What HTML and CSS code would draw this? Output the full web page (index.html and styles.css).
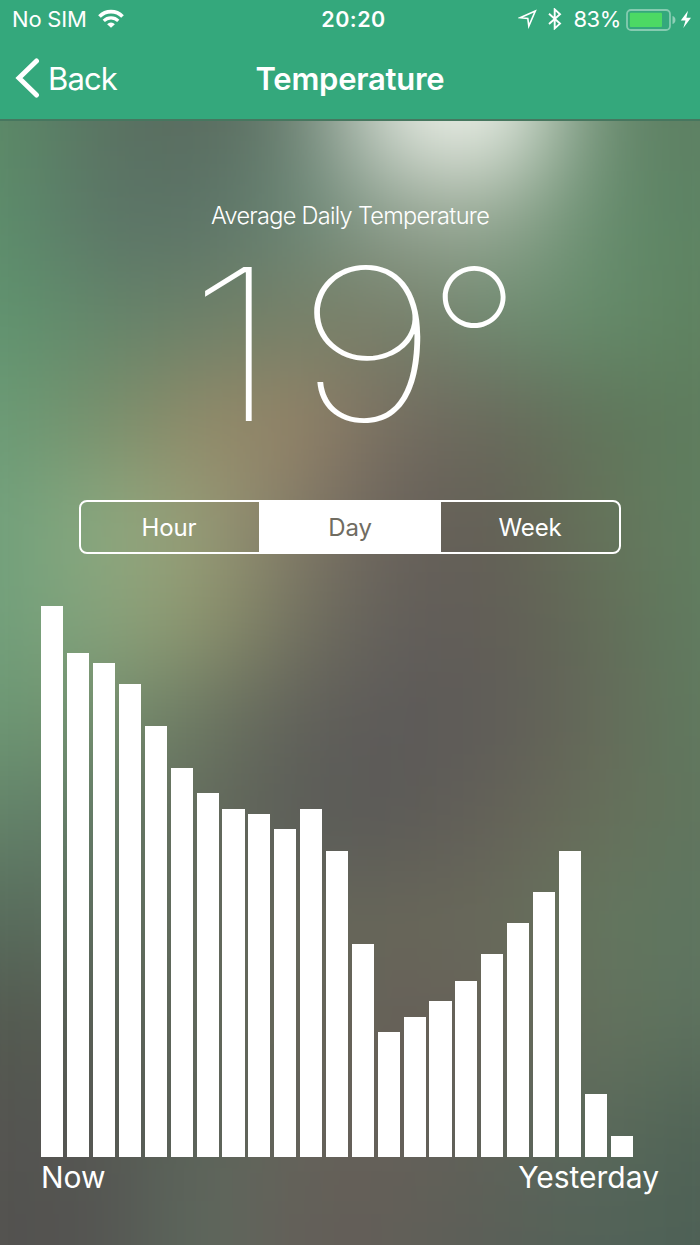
FILE: index.html
```html
<!DOCTYPE html>
<html lang="en">
<head>
<meta charset="utf-8">
<title>Temperature</title>
<link rel="stylesheet" href="styles.css">
</head>
<body>
<div class="screen">
  <header class="top">
    <div class="status">
      <div class="carrier">
        <span class="sim">No SIM</span>
        <svg class="wifi" width="26" height="19" viewBox="0 0 28 20"><g fill="none" stroke="#fff" stroke-width="4"><path d="M1.6 7.8A17.5 17.5 0 0 1 26.4 7.8"/><path d="M6.2 12.6A11 11 0 0 1 21.8 12.6" stroke-width="3.3"/></g><path d="M14 20l-4.2-3.9a5.8 5.8 0 0 1 8.4 0z" fill="#fff"/></svg>
      </div>
      <span class="time">20:20</span>
      <div class="indicators">
        <svg class="loc" width="19" height="20" viewBox="0 0 19 20"><path d="M17.3 2L2.2 8.7l7.6.8 1 7.6z" fill="none" stroke="#fff" stroke-width="1.6"/></svg>
        <svg class="bt" width="14" height="22" viewBox="0 0 14 22"><path d="M1 5.8l11 9.8-5.3 4.8V1.4L12 6.2 1 16" fill="none" stroke="#fff" stroke-width="1.9"/></svg>
        <span class="pct">83%</span>
        <svg class="battery" width="50" height="22" viewBox="0 0 50 22"><rect x="1" y="1" width="43" height="20" rx="4" fill="none" stroke="#fff" stroke-opacity=".4" stroke-width="1.8"/><rect x="3.8" y="3.8" width="32.2" height="14.2" rx="1" fill="#4cd964"/><path d="M46.5 7a4.2 4.2 0 0 1 0 8z" fill="#fff" fill-opacity=".45"/></svg>
        <svg class="bolt" width="12" height="19" viewBox="0 0 12 19"><path d="M8 .8L.8 10.6h4.7L3.3 18 11 7.8H6.4z" fill="#fff"/></svg>
      </div>
    </div>
    <nav class="nav">
      <a class="back"><svg width="26" height="40" viewBox="0 0 26 40"><path d="M22.5 3L5 20 22.5 37" fill="none" stroke="#fff" stroke-width="5" stroke-linecap="round"/></svg><span>Back</span></a>
      <h1 class="title">Temperature</h1>
      <span></span>
    </nav>
  </header>
  <main class="content">
    <div class="backdrop">
      <i class="r0"></i><i class="r1"></i><i class="r2"></i><i class="r3"></i><i class="r4"></i><i class="r5"></i><i class="r6"></i><i class="r7"></i><i class="r8"></i><i class="r9"></i><i class="r10"></i><i class="r11"></i>
    </div>
    <div class="caption">Average Daily Temperature</div>
    <div class="reading"><span class="one">1</span><span class="nine">9</span><span class="deg">°</span></div>
    <div class="segments"><span>Hour</span><span class="active">Day</span><span>Week</span></div>
    <div class="chart">
      <b style="height:551px"></b><b style="height:504px"></b><b style="height:494px"></b><b style="height:473px"></b><b style="height:431px"></b><b style="height:389px"></b><b style="height:364px"></b><b style="height:348px"></b><b style="height:343px"></b><b style="height:328px"></b><b style="height:348px"></b><b style="height:306px"></b><b style="height:213px"></b><b style="height:125px"></b><b style="height:140px"></b><b style="height:156px"></b><b style="height:176px"></b><b style="height:203px"></b><b style="height:234px"></b><b style="height:265px"></b><b style="height:306px"></b><b style="height:63px"></b><b style="height:21px"></b>
    </div>
    <div class="axis"><span>Now</span><span class="end">Yesterday</span></div>
  </main>
</div>
</body>
</html>
```
FILE: styles.css
```css
* { box-sizing: border-box; }
body { margin: 0; color: #fff; font-family: Inter, "Liberation Sans", sans-serif; }
.screen { width: 700px; height: 1245px; overflow: hidden; display: flex; flex-direction: column; }
svg { display: block; flex: none; }

.top { height: 121px; background: #34a87c; border-bottom: 2px solid #46775f; }
.status { height: 39px; display: grid; grid-template-columns: 1fr auto 1fr; align-items: center; padding: 0 8px 0 12px; font-size: 22px; line-height: 39px; }
.carrier { display: flex; align-items: center; gap: 11px; }
.sim { letter-spacing: -0.2px; }
.wifi { margin-top: -2px; }
.time { font-weight: 600; font-size: 21.5px; letter-spacing: 0.5px; padding-left: 3px; }
.indicators { display: flex; align-items: center; justify-content: flex-end; }
.loc { margin-top: -2px; }
.bt { margin-left: 11px; margin-top: -1px; }
.pct { margin: 0 5px 0 11px; letter-spacing: -0.4px; }
.bolt { margin-left: 4px; margin-top: -1px; }
.nav { height: 78px; display: grid; grid-template-columns: 1fr auto 1fr; align-items: center; padding: 0 14px; }
.back { display: flex; align-items: center; gap: 8px; font-size: 31px; letter-spacing: -0.9px; }
.title { margin: 0; font-size: 31px; font-weight: 600; letter-spacing: -0.25px; }

.content { position: relative; flex: 1; overflow: hidden; display: flex; flex-direction: column; z-index: 0; }
.backdrop { position: absolute; z-index: -1; left: -100px; right: -100px; top: -150px; height: 1400px; filter: blur(45px); display: flex; flex-direction: column; }
.backdrop i { display: block; height: 100px; background: linear-gradient(90deg, var(--a) 100px, var(--b) 200px, var(--c) 300px, var(--d) 400px, var(--e) 500px, var(--f) 600px, var(--g) 700px, var(--h) 800px); }
.backdrop .r0 { height: 200px; --a:#5b8c68; --b:#5a7262; --c:#586a5e; --d:#667e6e; --e:#e4eae1; --f:#f4f7f0; --g:#638669; --h:#5c7f62; }
.backdrop .r1 { --a:#5d8f6c; --b:#5b7466; --c:#5c7367; --d:#698674; --e:#92a291; --f:#98aa96; --g:#638b6b; --h:#5c8262; }
.backdrop .r2 { --a:#60956f; --b:#63856a; --c:#6d8069; --d:#788167; --e:#777d69; --f:#6f8c72; --g:#648c6a; --h:#5f815f; }
.backdrop .r3 { --a:#6a9c76; --b:#778f6c; --c:#938a68; --d:#978468; --e:#736b60; --f:#69695b; --g:#5f755a; --h:#5e7d5e; }
.backdrop .r4 { --a:#6f9f7b; --b:#8dab80; --c:#9b9d77; --d:#827866; --e:#67605a; --f:#635f55; --g:#67755a; --h:#5f7f60; }
.backdrop .r5 { --a:#6f9f7a; --b:#88a47d; --c:#92986f; --d:#72705f; --e:#615d5a; --f:#625d56; --g:#636d58; --h:#607d60; }
.backdrop .r6 { --a:#6a9773; --b:#76906f; --c:#6b7761; --d:#605f59; --e:#5c5959; --f:#5f5c57; --g:#666a59; --h:#5f7b5f; }
.backdrop .r7 { --a:#628268; --b:#637a67; --c:#646a5b; --d:#5a5c58; --e:#5c5a57; --f:#656258; --g:#68705a; --h:#5f765e; }
.backdrop .r8 { --a:#566b5b; --b:#5f6f5f; --c:#626a5c; --d:#66665a; --e:#68675a; --f:#68695a; --g:#64785f; --h:#5d7560; }
.backdrop .r9 { --a:#53594f; --b:#585e55; --c:#5f6a5c; --d:#666458; --e:#665f58; --f:#666259; --g:#64735d; --h:#5c715e; }
.backdrop .r10 { --a:#545450; --b:#555652; --c:#5c665b; --d:#65635a; --e:#665f58; --f:#5f635a; --g:#5c6c5c; --h:#506355; }
.backdrop .r11 { height: 200px; --a:#53524f; --b:#545351; --c:#5d6b5e; --d:#655d58; --e:#625f58; --f:#5a5f57; --g:#536459; --h:#4d6055; }

.caption { margin-top: 79px; height: 32px; line-height: 32px; text-align: center; font-size: 23.5px; font-weight: 300; letter-spacing: -0.7px; }
.reading { height: 210px; margin-top: 7px; padding-left: 187px; display: flex; font-size: 212px; line-height: 210px; font-weight: 100; }
.reading span { display: block; flex: none; transform-origin: 0 50%; }
.one { width: 109px; transform: scaleX(1.2); }
.nine { width: 130px; transform: scaleX(1.19); }
.deg { padding-top: 1px; }
.segments { align-self: center; width: 542px; height: 54px; margin-top: 51px; border: 2px solid #fff; border-radius: 8px; display: flex; justify-content: space-between; text-align: center; font-size: 24px; line-height: 51px; letter-spacing: -0.1px; }
.segments span { width: 178px; padding-right: 2px; }
.segments span:last-child { padding: 0; }
.segments .active { width: 182px; padding: 0; background: #fff; color: #706c61; }
.chart { margin: 52px 0 0 41.25px; height: 551px; display: flex; align-items: flex-end; gap: 3.7px; }
.chart b { width: 22.2px; background: #fff; flex: none; }
.axis { display: flex; justify-content: space-between; padding: 0 41px; line-height: 40px; font-size: 30px; }
```
